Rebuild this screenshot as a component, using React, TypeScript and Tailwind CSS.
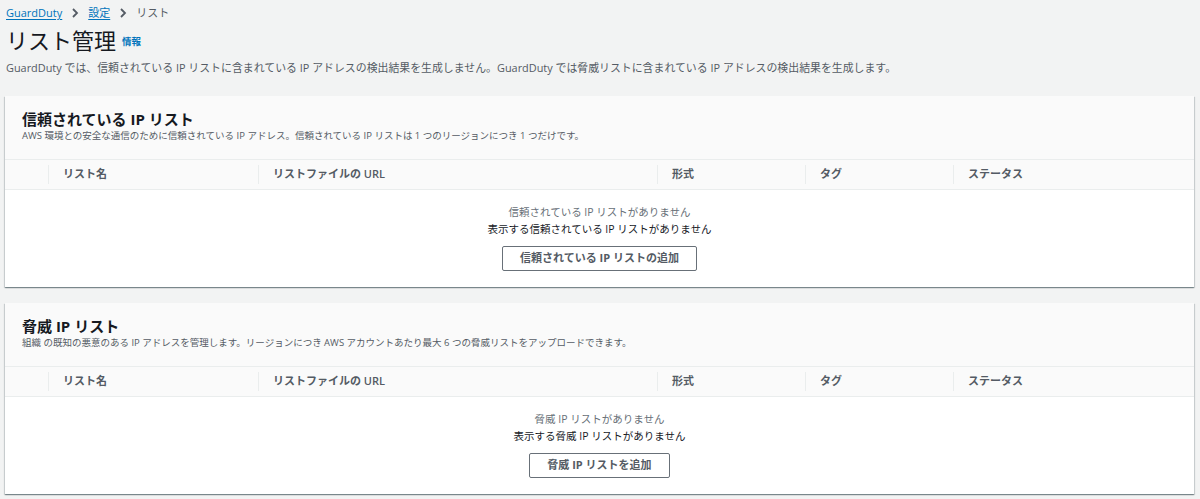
import React from 'react'

const font = "font-['Open_Sans','Noto_Sans_CJK_JP',sans-serif]"

const columns = ['', 'リスト名', 'リストファイルの URL', '形式', 'タグ', 'ステータス']

function ListCard({
  title,
  description,
  emptyTitle,
  emptyBody,
  action,
}: {
  title: string
  description: string
  emptyTitle: string
  emptyBody: string
  action: string
}) {
  return (
    <section className="bg-white shadow-[0_1px_1px_0_rgba(0,28,36,0.35),1px_1px_1px_0_rgba(0,28,36,0.12),-1px_1px_1px_0_rgba(0,28,36,0.12)]">
      <div className="bg-[#fafafa] px-[17px] pt-[13px] pb-[16px]">
        <h2 className="text-[15px] leading-[20px] font-bold text-[#16191f]">{title}</h2>
        <p className="text-[9.5px] leading-[14px] text-[#545b64]">{description}</p>
      </div>
      <div className="grid grid-cols-[43px_210px_399px_148px_148px_1fr] bg-[#fafafa] border-y border-[#eaeded] h-[31px]">
        {columns.map((c, i) => (
          <div key={i} className="relative flex items-center pl-[15px] text-[11px] font-semibold text-[#545b64]">
            {i > 0 && <span className="absolute left-0 top-[5px] bottom-[5px] w-px bg-[#eaeded]" />}
            {c}
          </div>
        ))}
      </div>
      <div className="flex flex-col items-center pt-[14px] pb-[16px]">
        <p className="text-[10.5px] leading-[16px] text-[#687078]">{emptyTitle}</p>
        <p className="text-[10.5px] leading-[18px] text-[#16191f]">{emptyBody}</p>
        <button className="mt-[8px] h-[25px] px-[17px] border border-[#687078] rounded-[2px] bg-white text-[11px] font-bold text-[#545b64]">
          {action}
        </button>
      </div>
    </section>
  )
}

export default function App() {
  return (
    <div className={`${font} min-h-[499px] w-full bg-[#f2f3f3] pl-[5px] pr-[6px] pt-[4px]`}>
      <nav className="flex items-center h-[18px] pl-[1px] text-[11px] text-[#545b64]">
        <a className="text-[#0073bb] underline decoration-[#0073bb] underline-offset-2">GuardDuty</a>
        <svg className="mx-[9px]" width="8" height="10" viewBox="0 0 8 10">
          <path d="M2 1l4 4-4 4" stroke="#545b64" strokeWidth="1.8" fill="none" />
        </svg>
        <a className="text-[#0073bb] underline decoration-[#0073bb] underline-offset-2">設定</a>
        <svg className="mx-[9px]" width="8" height="10" viewBox="0 0 8 10">
          <path d="M2 1l4 4-4 4" stroke="#545b64" strokeWidth="1.8" fill="none" />
        </svg>
        <span className="text-[#545b64]">リスト</span>
      </nav>
      <div className="flex items-end h-[33px] pl-[1px]">
        <h1 className="text-[22px] leading-[30px] text-[#16191f]">リスト管理</h1>
        <span className="ml-[6px] mb-[6px] text-[9.5px] font-bold text-[#0073bb]">情報</span>
      </div>
      <p className="mt-[5px] pl-[1px] text-[10.9px] leading-[16px] text-[#545b64]">
        GuardDuty では、信頼されている IP リストに含まれている IP アドレスの検出結果を生成しません。GuardDuty では脅威リストに含まれている IP アドレスの検出結果を生成します。
      </p>
      <div className="mt-[20px] flex flex-col gap-[16px]">
        <ListCard
          title="信頼されている IP リスト"
          description="AWS 環境との安全な通信のために信頼されている IP アドレス。信頼されている IP リストは 1 つのリージョンにつき 1 つだけです。"
          emptyTitle="信頼されている IP リストがありません"
          emptyBody="表示する信頼されている IP リストがありません"
          action="信頼されている IP リストの追加"
        />
        <ListCard
          title="脅威 IP リスト"
          description="組織 の既知の悪意のある IP アドレスを管理します。リージョンにつき AWS アカウントあたり最大 6 つの脅威リストをアップロードできます。"
          emptyTitle="脅威 IP リストがありません"
          emptyBody="表示する脅威 IP リストがありません"
          action="脅威 IP リストを追加"
        />
      </div>
    </div>
  )
}
